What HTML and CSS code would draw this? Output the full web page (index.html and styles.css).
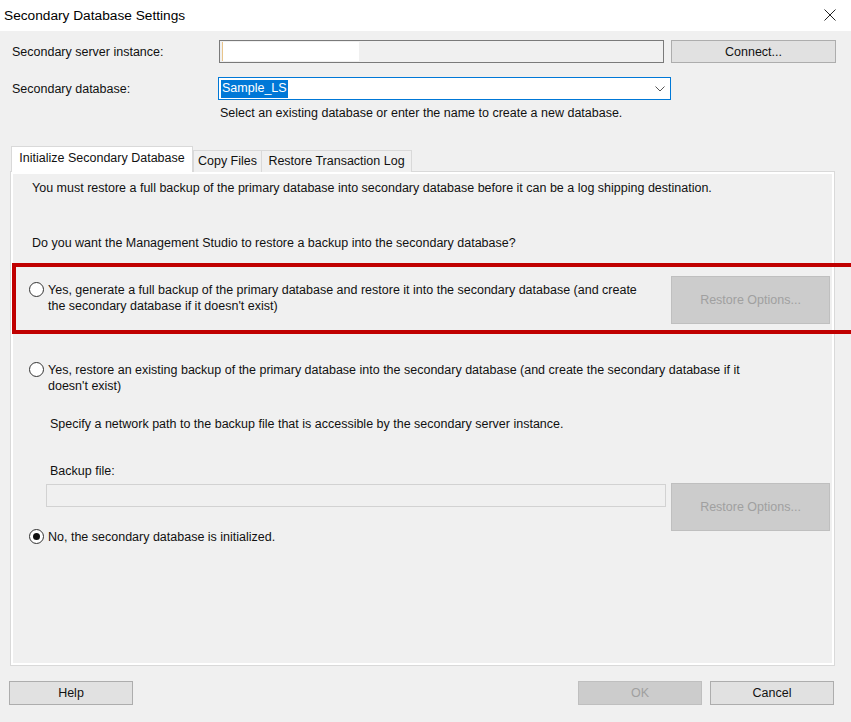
FILE: index.html
```html
<!DOCTYPE HTML>
<html>
<head>
<link rel="stylesheet" href="styles.css">
</head>
<body>
<div class="window">
    <div class="titlebar">
        <span class="title">Secondary Database Settings</span>
        <svg class="close" width="12" height="12" viewBox="0 0 12 12">
            <path d="M0.5 0.5 L11.5 11.5 M11.5 0.5 L0.5 11.5" stroke="#222" stroke-width="1" fill="none"/>
        </svg>
    </div>

    <div class="content">
        <div class="form-row">
            <label class="field-label">Secondary server instance:</label>
            <div class="textbox server"><span class="filled"></span></div>
            <button class="btn connect">Connect...</button>
        </div>
        <div class="form-row second">
            <label class="field-label">Secondary database:</label>
            <div class="combo">
                <span class="selected-text">Sample_LS</span>
                <svg class="chevron" width="10" height="6" viewBox="0 0 10 6">
                    <path d="M0.5 0.5 L5 5 L9.5 0.5" stroke="#555" stroke-width="1" fill="none"/>
                </svg>
            </div>
        </div>
        <p class="hint">Select an existing database or enter the name to create a new database.</p>

        <div class="tabs">
            <div class="tab active">Initialize Secondary Database</div>
            <div class="tab copy">Copy Files</div>
            <div class="tab log">Restore Transaction Log</div>
        </div>

        <section class="panel">
            <p class="note">You must restore a full backup of the primary database into secondary database before it can be a log shipping destination.</p>
            <p class="note question">Do you want the Management Studio to restore a backup into the secondary database?</p>

            <div class="option first">
                <span class="radio"></span>
                <span class="option-text narrow">Yes, generate a full backup of the primary database and restore it into the secondary database (and create the secondary database if it doesn't exist)</span>
                <button class="btn restore" disabled>Restore Options...</button>
            </div>

            <div class="option second">
                <span class="radio"></span>
                <span class="option-text wide">Yes, restore an existing backup of the primary database into the secondary database (and create the secondary database if it doesn't exist)</span>
            </div>
            <p class="sub specify">Specify a network path to the backup file that is accessible by the secondary server instance.</p>
            <p class="sub backup-label">Backup file:</p>
            <div class="backup-row">
                <div class="textbox backup"></div>
                <button class="btn restore" disabled>Restore Options...</button>
            </div>

            <div class="option third">
                <span class="radio checked"></span>
                <span class="option-text">No, the secondary database is initialized.</span>
            </div>
        </section>

        <div class="footer">
            <button class="btn footer-btn">Help</button>
            <div class="footer-right">
                <button class="btn footer-btn" disabled>OK</button>
                <button class="btn footer-btn">Cancel</button>
            </div>
        </div>
    </div>

    <div class="highlight"></div>
</div>
</body>
</html>
```

FILE: styles.css
```css
body {
    margin: 0;
    font-family: "Liberation Sans", Arial, sans-serif;
    font-size: 12.5px;
    color: #111;
}

.window {
    position: relative;
    width: 851px;
    height: 722px;
    background: #f0f0f0;
    overflow: hidden;
}

.titlebar {
    height: 31px;
    background: #fff;
    display: flex;
    align-items: center;
    justify-content: space-between;
    padding: 0 15px 1px 4px;
    box-sizing: border-box;
}

.title {
    font-size: 13.7px;
    color: #000;
}

.content {
    padding: 9px 15px 0 9px;
}

p {
    margin: 0;
}

.form-row {
    display: flex;
    align-items: center;
    height: 23px;
}

.form-row.second {
    margin-top: 14px;
}

.field-label {
    width: 207px;
    padding-left: 3px;
}

.textbox {
    box-sizing: border-box;
    height: 23px;
    border: 1px solid #7a7a7a;
    background: #f0f0f0;
}

.textbox.server {
    width: 445px;
    margin-right: 7px;
    display: flex;
    padding: 1px 0 1px 2px;
}

.textbox.server .filled {
    width: 136px;
    background: #fff;
    border-left: 1px solid #e8c48a;
}

.combo {
    box-sizing: border-box;
    width: 453px;
    height: 23px;
    margin-left: -1px;
    border: 1px solid #0078d7;
    background: #fff;
    display: flex;
    align-items: center;
    justify-content: space-between;
    padding: 0 5px 0 2px;
}

.selected-text {
    background: #0078d7;
    color: #fff;
    padding: 1px 1px 2px 1px;
    line-height: 15px;
}

.chevron {
    margin-top: 1px;
}

.hint {
    margin: 5px 0 0 211px;
    line-height: 16px;
}

.btn {
    box-sizing: border-box;
    font-family: inherit;
    font-size: 12.5px;
    color: #111;
    background: #e1e1e1;
    border: 1px solid #adadad;
    padding: 0;
}

.btn:disabled {
    background: #cccccc;
    border-color: #bfbfbf;
    color: #a0a0a0;
}

.btn.connect {
    width: 165px;
    height: 23px;
}

.tabs {
    display: flex;
    align-items: flex-end;
    margin: 25px 0 0 2px;
    height: 26px;
    position: relative;
    z-index: 1;
}

.tab {
    box-sizing: border-box;
    height: 22px;
    line-height: 20px;
    border: 1px solid #d9d9d9;
    border-bottom: none;
    background: #f0f0f0;
    text-align: center;
}

.tab.active {
    height: 26px;
    line-height: 22px;
    background: #fff;
    width: 182px;
}

.tab.copy {
    width: 69px;
}

.tab.log {
    width: 150px;
    border-left: none;
}

.panel {
    box-sizing: border-box;
    width: 825px;
    height: 495px;
    margin: -1px 0 0 1px;
    border: 1px solid #d9d9d9;
    box-shadow: inset 0 0 0 2px #fff;
    padding: 8px 0 0 21px;
}

.note {
    line-height: 16px;
}

.note.question {
    margin-top: 39px;
}

.option {
    display: flex;
    align-items: flex-start;
    line-height: 16px;
}

.option.first {
    margin-top: 31px;
}

.option.second {
    margin-top: 38px;
}

.option.third {
    margin-top: -2px;
}

.radio {
    box-sizing: border-box;
    width: 15px;
    height: 15px;
    border: 1px solid #333;
    border-radius: 50%;
    background: #fff;
    margin: 0 4px 0 -3px;
    flex-shrink: 0;
    display: flex;
    align-items: center;
    justify-content: center;
}

.radio.checked::after {
    content: "";
    width: 7px;
    height: 7px;
    border-radius: 50%;
    background: #111;
}

.option-text.narrow {
    width: 600px;
}

.option-text.wide {
    width: 700px;
}

.btn.restore {
    width: 159px;
    height: 48px;
    margin: -6px 0 0 23px;
}

.sub {
    margin-left: 18px;
    line-height: 16px;
}

.sub.specify {
    margin-top: 22px;
}

.sub.backup-label {
    margin-top: 31px;
}

.backup-row {
    display: flex;
    align-items: flex-start;
    margin: 4px 0 0 14px;
}

.textbox.backup {
    width: 620px;
    border-color: #d2d2d2;
    background: #f0f0f0;
    margin-top: 1px;
    margin-right: 5px;
}

.backup-row .btn.restore {
    margin: 0;
}

.footer {
    display: flex;
    justify-content: space-between;
    margin-top: 15px;
    width: 825px;
}

.footer-right {
    display: flex;
    gap: 8px;
}

.btn.footer-btn {
    width: 124px;
    height: 24px;
}

.highlight {
    position: absolute;
    left: 12px;
    top: 263px;
    width: 850px;
    height: 71px;
    box-sizing: border-box;
    border: 4px solid #c00000;
}
```
